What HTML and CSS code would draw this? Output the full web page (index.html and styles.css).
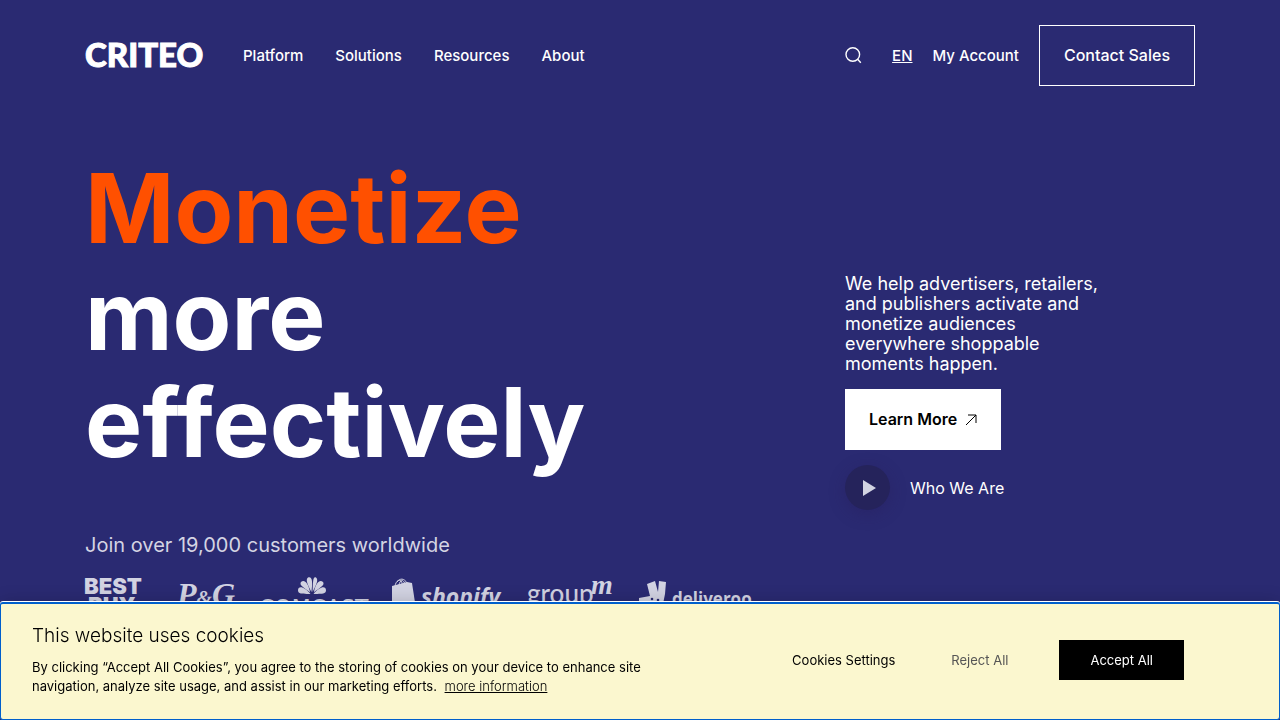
FILE: index.html
```html
<!DOCTYPE html>
<html lang="en">
<head>
<meta charset="utf-8">
<meta name="viewport" content="width=device-width, initial-scale=1">
<title>Criteo</title>
<link rel="stylesheet" href="styles.css">
</head>
<body>
<header class="header wrap">
  <a class="brand" href="#" aria-label="Criteo home">
    <svg width="118" height="24" viewBox="0 0 118 24"><text class="brand-text" x="0" y="23">CRITEO</text></svg>
  </a>
  <nav class="nav">
    <a href="#">Platform</a>
    <a href="#">Solutions</a>
    <a href="#">Resources</a>
    <a href="#">About</a>
  </nav>
  <div class="tools">
    <button class="search" type="button" aria-label="Search">
      <svg width="17" height="17" viewBox="0 0 17 17" fill="none" stroke="currentColor" stroke-width="1.4"><circle cx="7.8" cy="7.5" r="6.8"/><path d="M12.6 12.3l3.2 3.4"/></svg>
    </button>
    <a class="lang" href="#">EN</a>
    <a href="#">My Account</a>
    <a class="contact" href="#">Contact Sales</a>
  </div>
</header>

<main class="hero wrap">
  <section class="lead">
    <h1 class="title"><span class="accent">Monetize</span><br>more<br>effectively</h1>
    <p class="join">Join over 19,000 customers worldwide</p>
    <div class="logos">
      <svg class="logo" width="66" height="50" viewBox="0 0 66 50"><text class="bestbuy" x="-1" y="17">BEST</text><text class="bestbuy" x="3" y="36">BUY</text></svg>
      <svg class="logo" width="56" height="50" viewBox="0 0 56 50"><text class="pg" x="0" y="28">P<tspan class="amp">&amp;</tspan>G</text></svg>
      <svg class="logo" width="106" height="50" viewBox="0 0 106 50">
        <g transform="translate(53 17)">
          <path d="M-1.500 0C-6-.5-14 1-14-3.500C-14-8.500-8-8-1.500 0Z"/>
          <path d="M-1.800-1.700C-9-7-13-9-11-12C-8-15-4-12-1.800-1.700Z"/>
          <path d="M-.6-2C-4-9-7-14-4-16.500C0-18 1-13-.6-2Z"/>
          <path d="M.6-2C4-9 7-14 4-16.500C1-18 1-13 .6-2Z"/>
          <path d="M1.800-1.700C9-7 13-9 11-12C8-15 4-12 1.800-1.700Z"/>
          <path d="M1.500 0C6-.5 14 1 14-3.500C14-8.500 8-8 1.500 0Z"/>
        </g>
        <text class="comcast" x="0" y="38">COMCAST</text>
      </svg>
      <svg class="logo" width="110" height="50" viewBox="0 0 110 50">
        <path d="M1 9L16 5L21 6L25 32L1 32Z"/>
        <path class="handle" d="M4 9C5 4 8 2 10 4C11.500 5.500 11 7 11 8M8 8C9 3 12 2 13.500 6M6 5C9 1 13 1 16 6"/>
        <text class="shopify" x="30" y="28">shopify</text>
      </svg>
      <svg class="logo" width="86" height="50" viewBox="0 0 86 50"><text class="group" x="0" y="26">group</text><text class="group-m" x="64" y="17">m</text></svg>
      <svg class="logo" width="114" height="50" viewBox="0 0 114 50">
        <path d="M8 7L16 4L19 15L20 4L27 5L26 17L23 32H8L0 26V21L11 19Z"/>
        <circle class="eye" cx="13" cy="22" r="1.300"/><circle class="eye" cx="19" cy="23" r="1.300"/>
        <text class="deliveroo" x="33" y="28">deliveroo</text>
      </svg>
    </div>
  </section>
  <aside class="pitch">
    <p class="pitch-text">We help advertisers, retailers, and publishers activate and monetize audiences everywhere shoppable moments happen.</p>
    <a class="learn" href="#">Learn More
      <svg width="12" height="12" viewBox="0 0 12 12" fill="none" stroke="currentColor"><path d="M1 11L11 1M3 1H11V9"/></svg>
    </a>
    <button class="video" type="button">
      <span class="play"><svg width="13" height="16" viewBox="0 0 13 16"><path d="M0 0L13 8L0 16Z" fill="currentColor"/></svg></span>
      Who We Are
    </button>
  </aside>
</main>

<section class="cookies" role="dialog" aria-labelledby="cookie-title">
  <div class="cookie-copy">
    <h2 class="cookie-title" id="cookie-title">This website uses cookies</h2>
    <p class="cookie-text">By clicking “Accept All Cookies”, you agree to the storing of cookies on your device to enhance site navigation, analyze site usage, and assist in our marketing efforts. <a href="#">more information</a></p>
  </div>
  <div class="cookie-actions">
    <button class="settings" type="button">Cookies Settings</button>
    <button class="reject" type="button">Reject All</button>
    <button class="accept" type="button">Accept All</button>
  </div>
</section>
</body>
</html>
```
FILE: styles.css
```css
* { box-sizing: border-box; }
body {
  margin: 0;
  background: #2a2a72;
  color: #fff;
  font-family: Inter, "Liberation Sans", sans-serif;
}
h1, h2, p { margin: 0; }
a { color: inherit; text-decoration: none; }
button { font: inherit; color: inherit; background: none; border: 0; padding: 0; cursor: pointer; }
svg { display: block; overflow: visible; }

.wrap { max-width: 1110px; margin: 0 auto; }

.header {
  display: flex;
  align-items: center;
  padding-top: 25px;
  font-size: 15px;
  font-weight: 500;
}
.brand-text { font: 900 33px Lato, sans-serif; fill: #fff; stroke: #fff; stroke-width: 1; }
.nav { display: flex; gap: 32px; margin-left: 40px; }
.tools { display: flex; align-items: center; gap: 20px; margin-left: auto; }
.search { margin-right: 10px; }
.lang { text-decoration: underline; }
.contact {
  padding: 20px 24px;
  border: 1px solid #fff;
  font-size: 16px;
  line-height: 19px;
}

.hero { display: flex; justify-content: space-between; padding-top: 69px; }
.title { font-size: 96px; line-height: 107px; font-weight: 700; }
.accent { color: #ff5000; }
.join { margin-top: 57px; font-size: 20px; line-height: 24px; color: #d4d4e3; }
.logos { display: flex; gap: 26px; margin-top: 20px; }
.logo { fill: #d2d3e2; flex: none; }
.bestbuy { font: 900 22px Inter, sans-serif; }
.pg { font: italic bold 32px "Liberation Serif", serif; }
.amp { font-size: 20px; }
.comcast { font: 22px "DejaVu Sans", sans-serif; }
.handle { fill: none; stroke: #d2d3e2; stroke-width: 1; }
.shopify { font: italic bold 23px "Open Sans", sans-serif; }
.group { font: 500 26px Lato, sans-serif; }
.group-m { font: italic bold 28px "Liberation Serif", serif; }
.eye { fill: #2a2a72; }
.deliveroo { font: bold 17px "Open Sans", sans-serif; }

.pitch {
  display: flex;
  flex-direction: column;
  align-items: flex-start;
  width: 350px;
  padding-top: 119px;
}
.pitch-text { max-width: 260px; font-size: 18px; line-height: 20px; }
.learn {
  display: flex;
  align-items: center;
  gap: 8px;
  margin-top: 15px;
  padding: 20px 24px;
  background: #fff;
  color: #000;
  font-size: 16px;
  line-height: 21px;
  font-weight: 600;
}
.video { display: flex; align-items: center; gap: 20px; margin-top: 15px; font-size: 16px; }
.play {
  display: flex;
  align-items: center;
  justify-content: center;
  width: 45px;
  height: 45px;
  padding-left: 4px;
  border-radius: 50%;
  background: #25235b;
  color: #d2d3e2;
  box-shadow: 0 4px 16px rgba(40, 30, 90, 0.4);
}

.cookies {
  position: fixed;
  left: 0;
  right: 0;
  bottom: 0;
  display: flex;
  justify-content: space-between;
  align-items: center;
  padding: 20px 95px 23px 31px;
  border: 1px solid #005fcc;
  border-top-width: 2px;
  border-radius: 3px;
  background: #fbf7cf;
  color: #000;
  box-shadow: 0 -1px 0 #fff, 0 0 18px rgba(0, 0, 0, 0.2);
  font-size: 13px;
}
.cookie-title { font-size: 19px; line-height: 24px; font-weight: 300; }
.cookie-text { max-width: 640px; margin-top: 10px; line-height: 19px; }
.cookie-text a { margin-left: 4px; font-weight: 300; text-decoration: underline; }
.cookie-actions { display: flex; align-items: center; }
.reject { margin: 0 51px 0 56px; color: #555; }
.accept { padding: 12px 31px; background: #000; color: #fff; line-height: 16px; }
```
